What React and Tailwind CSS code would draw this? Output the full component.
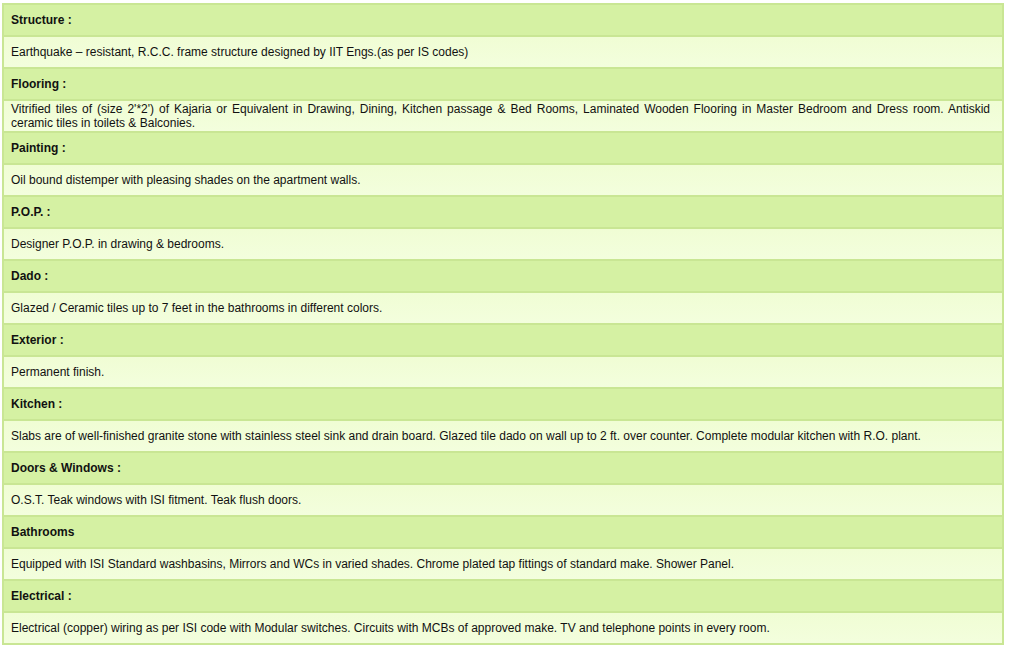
const specs = [
    { title: "Structure :", text: "Earthquake – resistant, R.C.C. frame structure designed by IIT Engs.(as per IS codes)" },
    {
        title: "Flooring :",
        text: "Vitrified tiles of (size 2'*2') of Kajaria or Equivalent in Drawing, Dining, Kitchen passage & Bed Rooms, Laminated Wooden Flooring in Master Bedroom and Dress room. Antiskid ceramic tiles in toilets & Balconies.",
    },
    { title: "Painting :", text: "Oil bound distemper with pleasing shades on the apartment walls." },
    { title: "P.O.P. :", text: "Designer P.O.P. in drawing & bedrooms." },
    { title: "Dado :", text: "Glazed / Ceramic tiles up to 7 feet in the bathrooms in different colors." },
    { title: "Exterior :", text: "Permanent finish." },
    {
        title: "Kitchen :",
        text: "Slabs are of well-finished granite stone with stainless steel sink and drain board. Glazed tile dado on wall up to 2 ft. over counter. Complete modular kitchen with R.O. plant.",
    },
    { title: "Doors & Windows :", text: "O.S.T. Teak windows with ISI fitment. Teak flush doors." },
    {
        title: "Bathrooms",
        text: "Equipped with ISI Standard washbasins, Mirrors and WCs in varied shades. Chrome plated tap fittings of standard make. Shower Panel.",
    },
    {
        title: "Electrical :",
        text: "Electrical (copper) wiring as per ISI code with Modular switches. Circuits with MCBs of approved make. TV and telephone points in every room.",
    },
];

export default function App() {
    return (
        <div className="bg-white min-h-[650px] pt-[3px] pl-[2px]" style={{ fontFamily: "'Liberation Sans', Arial, sans-serif" }}>
            <div className="w-[1002px] border-2 border-[#c9e694] flex flex-col gap-[2px] bg-[#c9e694] text-[12px] leading-[14px] text-[#111]">
                {specs.map((s) => (
                    <div key={s.title} className="flex flex-col gap-[2px]">
                        <div className="h-[30px] bg-[#d5f1a3] flex items-center px-[7px] font-bold">
                            {s.title}
                        </div>
                        <div className="h-[30px] bg-gradient-to-b from-[#f0fdd4] to-[#f3fedd] flex items-center pl-[7px] pr-[12px]">
                            <p className="w-full text-justify">{s.text}</p>
                        </div>
                    </div>
                ))}
            </div>
        </div>
    );
}
